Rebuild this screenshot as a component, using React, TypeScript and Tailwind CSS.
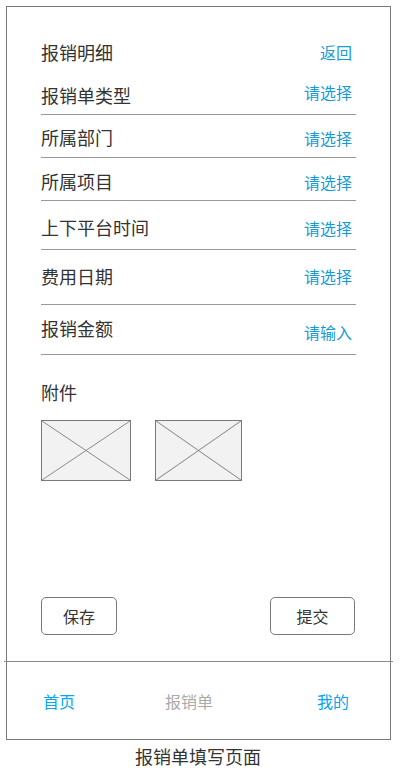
const font = { fontFamily: '"Noto Sans CJK SC", "Noto Sans", sans-serif' };

type Row = { label: string; action: string; pad: string; shift: string };

const rows: Row[] = [
  { label: '报销单类型', action: '请选择', pad: 'pt-[19px] pb-[7px]', shift: '-mt-[6px]' },
  { label: '所属部门', action: '请选择', pad: 'pt-[10px] pb-[8px]', shift: '-mb-[2px]' },
  { label: '所属项目', action: '请选择', pad: 'pt-[11px] pb-[7px]', shift: '-mb-[2px]' },
  { label: '上下平台时间', action: '请选择', pad: 'pt-[14px] pb-[10px]', shift: '-mb-[2px]' },
  { label: '费用日期', action: '请选择', pad: 'pt-[14px] pb-[16px]', shift: '' },
  { label: '报销金额', action: '请输入', pad: 'pt-[11px] pb-[14px]', shift: '-mb-[8px]' },
];

function Placeholder({ w }: { w: string }) {
  return (
    <div className={`${w} h-[61px] border border-[#797979] bg-[#f2f2f2]`}>
      <svg className="w-full h-full block" viewBox="0 0 100 100" preserveAspectRatio="none">
        <line x1="0" y1="0" x2="100" y2="100" stroke="#8a8a8a" strokeWidth="1" vectorEffect="non-scaling-stroke" />
        <line x1="100" y1="0" x2="0" y2="100" stroke="#8a8a8a" strokeWidth="1" vectorEffect="non-scaling-stroke" />
      </svg>
    </div>
  );
}

export default function App() {
  return (
    <div className="w-[400px] h-[768px] bg-white overflow-hidden pt-[6px]" style={font}>
      <div className="ml-[6px] w-[385px] h-[734px] border border-[#797979] flex flex-col">
        <div className="pl-[34px] pt-[33px]">
          <div className="w-[315px] flex justify-between items-center h-[24px] pr-[4px]">
            <span className="text-[18px] text-[#333] leading-[24px]">报销明细</span>
            <span className="text-[16px] text-[#169bd5] leading-[24px]">返回</span>
          </div>

          {rows.map((r) => (
            <div
              key={r.label}
              className={`w-[315px] flex justify-between items-center border-b border-[#999] pr-[4px] ${r.pad}`}
            >
              <span className="text-[18px] text-[#333] leading-[24px]">{r.label}</span>
              <span className={`text-[16px] text-[#169bd5] leading-[24px] ${r.shift}`}>{r.action}</span>
            </div>
          ))}

          <div className="mt-[25px] text-[18px] text-[#333] leading-[24px]">附件</div>
          <div className="mt-[16px] flex gap-[24px]">
            <Placeholder w="w-[90px]" />
            <Placeholder w="w-[87px]" />
          </div>

          <div className="mt-[116px] w-[314px] flex justify-between">
            <button className="w-[76px] h-[38px] border border-[#797979] rounded-[5px] text-[16px] text-[#333]">
              保存
            </button>
            <button className="w-[85px] h-[38px] border border-[#797979] rounded-[5px] text-[16px] text-[#333]">
              提交
            </button>
          </div>
        </div>

        <div className="mt-[26px] -mx-[3px] h-px bg-[#8a8a8a]" />

        <div className="flex-1 flex items-center text-[16px]">
          <span className="ml-[36px] text-[#02a7f0]">首页</span>
          <span className="ml-[90px] text-[#aaaaaa]">报销单</span>
          <span className="ml-[104px] text-[#02a7f0]">我的</span>
        </div>
      </div>
      <div className="text-center text-[18px] text-[#333] leading-[24px] pr-[4px] mt-[4px]">报销单填写页面</div>
    </div>
  );
}
